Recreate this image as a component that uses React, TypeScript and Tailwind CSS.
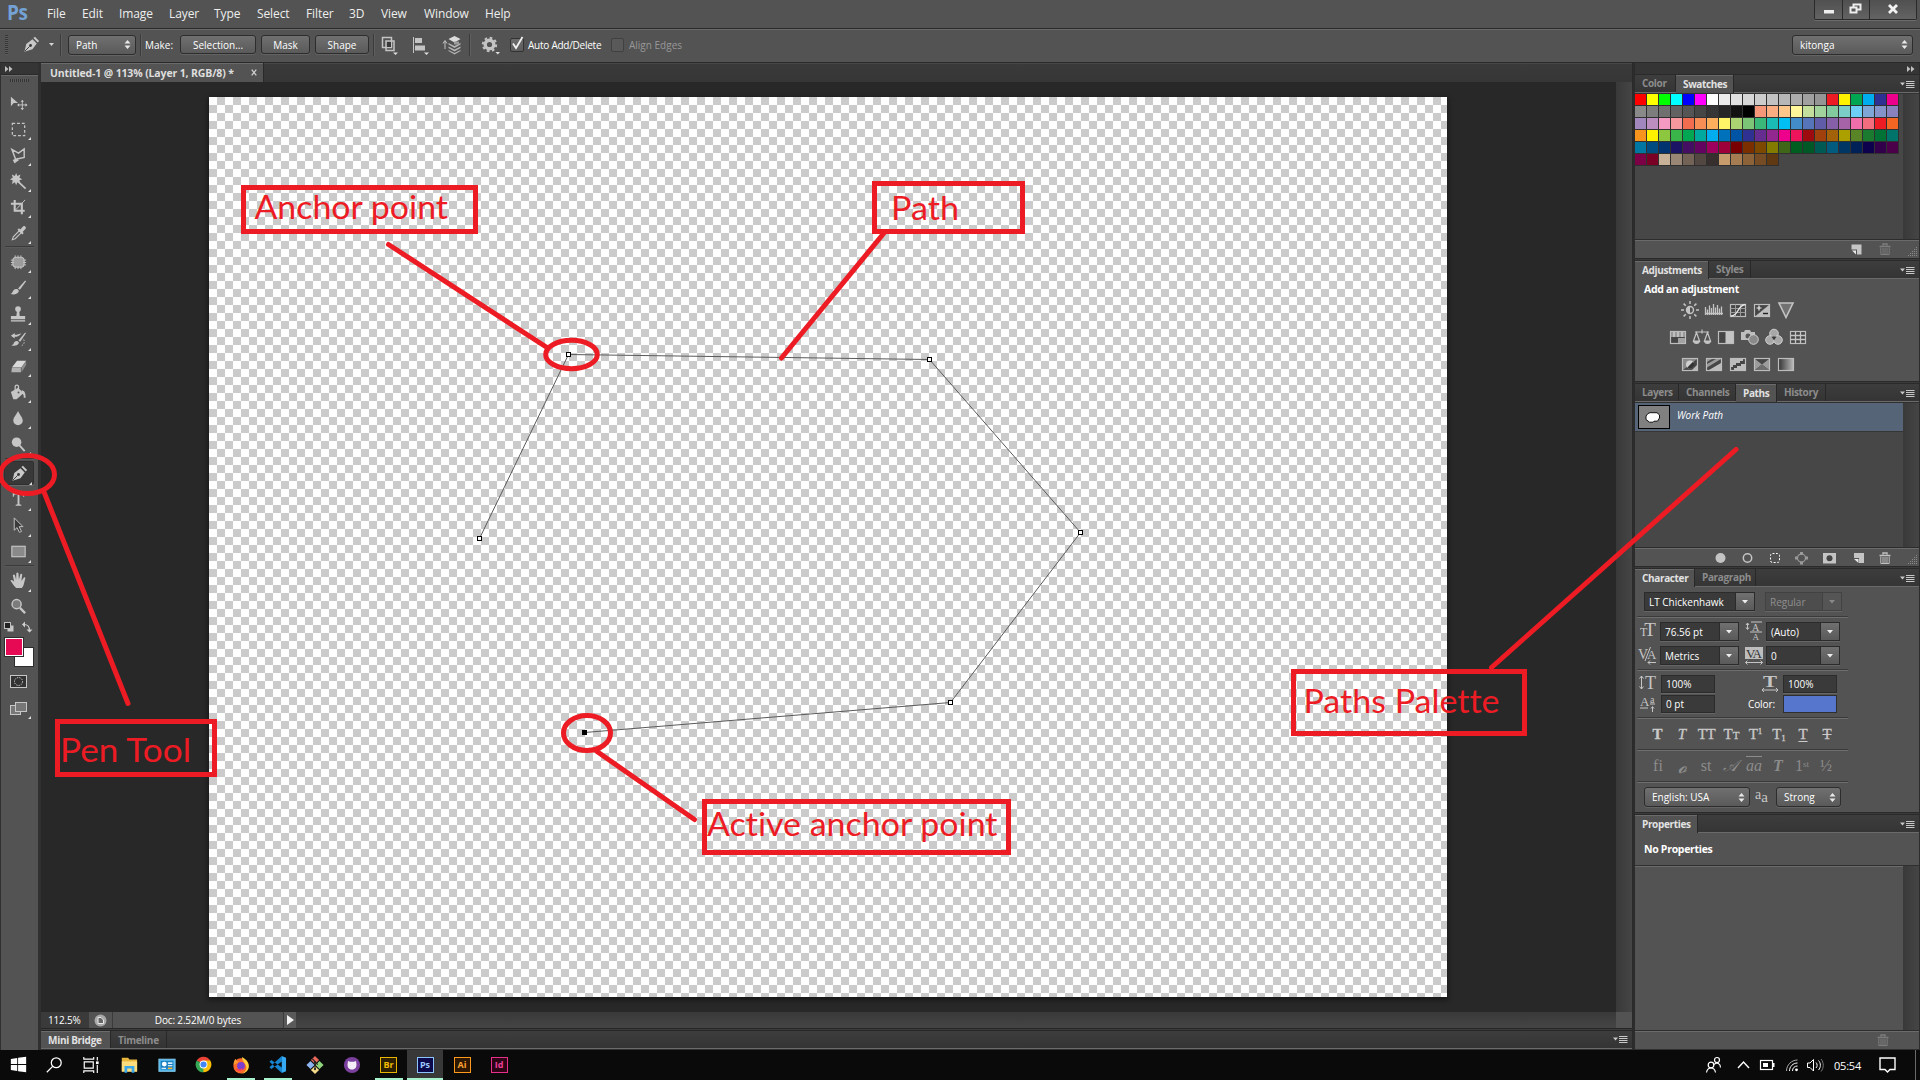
import React from "react";
import type { ReactNode } from "react";

const SWATCH_ROWS = [
  "ff0000 ffff00 00ff00 00ffff 0000ff ff00ff ffffff ebebeb e1e1e1 d7d7d7 cccccc c2c2c2 b7b7b7 acacac a0a0a0 959595 ed1c24 fff200 00a651 00aeef 2e3192 ec008c",
  "898989 7d7d7d 707070 626262 555555 464646 363636 262626 111111 000000 f7977a f9ad81 fdc68a fff79a c4df9b a2d39c 82ca9d 7bcdc8 6ecff6 7ea7d8 8493ca 8882be",
  "a187be bc8dbf f49ac2 f6989d f26c4f f68e55 fbaf5c fff467 acd372 7cc576 3bb878 1abbb4 00bff3 438cca 5574b9 605ca8 855fa8 a763a8 f06ea9 f26d7d ed1c24 f26522",
  "f7941d fff200 8dc73f 39b54a 00a651 00a99d 00aeef 0072bc 0054a6 2e3192 662d91 92278f ec008c ed145b 9e0b0f a0410d a36209 aba000 598527 1a7b30 007236 00746b",
  "0076a3 004b80 003471 1b1464 440e62 630460 9e005d 9e0039 790000 7b2e00 7d4900 827b00 406618 005e20 005826 005952 005b7f 003663 002157 0d004c 32004b 4b0049",
  "7b0046 7a0026 c7b299 998675 736357 534741 362f2d c69c6d a67c52 8c6239 754c24 603913",
].map((row) => row.split(" "));

function Ico({ children, size = 20, className = "" }: { children: ReactNode; size?: number; className?: string }) {
  return (
    <svg width={size} height={size} viewBox="0 0 20 20" className={"shrink-0 " + className} fill="none">
      {children}
    </svg>
  );
}

const G = "#c4c4c4";

/* ---------- Menu bar ---------- */

const MENUS: [string, string][] = [
  ["File", "w-[35px]"],
  ["Edit", "w-[37px]"],
  ["Image", "w-[50px]"],
  ["Layer", "w-[45px]"],
  ["Type", "w-[43px]"],
  ["Select", "w-[49px]"],
  ["Filter", "w-[43px]"],
  ["3D", "w-[32px]"],
  ["View", "w-[43px]"],
  ["Window", "w-[61px]"],
  ["Help", "w-[40px]"],
];

function MenuBar() {
  return (
    <div className="flex h-[28px] shrink-0 items-start bg-[#535353]">
      <div className="w-[47px] pl-[7px] text-[21px] font-bold leading-[24px] tracking-[-0.5px] text-[#74a2d6] font-['Open_Sans',sans-serif]">
        <span className="inline-block origin-left scale-x-90">Ps</span>
      </div>
      {MENUS.map(([m, w]) => (
        <div key={m} className={"pt-[5px] text-[12px] leading-[17px] tracking-[-0.1px] text-[#eeeeee] " + w}>
          {m}
        </div>
      ))}
      <div className="ml-auto mr-[3px] flex h-[20px] rounded-b-[2px] border border-t-0 border-[#2a2a2a] bg-gradient-to-b from-[#505050] to-[#636363] shadow-[0_1px_0_#6c6c6c]">
        <div className="w-[28px] border-r border-[#2a2a2a]">
          <Ico className="ml-[4px] mt-px">
            <rect x="5" y="9" width="10" height="3.500" fill="#eee" />
          </Ico>
        </div>
        <div className="w-[27px] border-r border-[#2a2a2a]">
          <Ico className="ml-[2px] -mt-px">
            <path d="M8.500 9V5.500h7v5H12M5.500 8.500h6v5h-6z" stroke="#eee" strokeWidth="2" />
          </Ico>
        </div>
        <div className="w-[46px]">
          <Ico className="ml-[13px] -mt-px">
            <path d="M6 6l8 8M14 6l-8 8" stroke="#f2f2f2" strokeWidth="2.800" />
          </Ico>
        </div>
      </div>
    </div>
  );
}

/* ---------- Options bar ---------- */

function Button({ children, className }: { children: ReactNode; className: string }) {
  return (
    <div
      className={
        "flex h-[19px] items-center justify-center rounded-[3px] border border-[#2d2d2d] bg-gradient-to-b from-[#707070] to-[#5a5a5a] text-[10px] leading-none text-white shadow-[0_1px_0_#636363] " +
        className
      }
    >
      {children}
    </div>
  );
}

function UpDown() {
  return (
    <svg width="7" height="9" viewBox="0 0 7 9" className="shrink-0">
      <path d="M3.500 0L6.500 3.600H.5zM3.500 9L6.500 5.400H.5z" fill="#e8e8e8" />
    </svg>
  );
}

function Select({ children, className }: { children: ReactNode; className: string }) {
  return (
    <div
      className={
        "flex h-[20px] items-center justify-between rounded-[3px] border border-[#2d2d2d] bg-gradient-to-b from-[#707070] to-[#5a5a5a] pr-[4px] pl-[7px] text-[10px] leading-none text-white shadow-[0_1px_0_#636363] " +
        className
      }
    >
      <span>{children}</span>
      <UpDown />
    </div>
  );
}

function Sep() {
  return <div className="h-[22px] w-px shrink-0 bg-[#3b3b3b] shadow-[1px_0_0_#5f5f5f]" />;
}

function CornerTri({ className = "" }: { className?: string }) {
  return (
    <svg width="5" height="4" viewBox="0 0 5 4" className={className}>
      <path d="M0 0h5L2.500 3z" fill="#d5d5d5" />
    </svg>
  );
}

function PenShape() {
  return (
    <g>
      <path d="M2.500 17.500L4.500 9.500 11 4.500 15.500 9 11 15z" fill="#c8c8c8" />
      <path d="M12 3.200L13.600 1.800 18 6.300 16.600 7.900z" fill="#c8c8c8" />
      <path d="M3 17l5-5" stroke="#3a3a3a" strokeWidth="1" />
      <circle cx="9" cy="11" r="1.500" fill="#3a3a3a" />
    </g>
  );
}

function OptionsBar() {
  return (
    <div className="flex h-[34px] shrink-0 items-center border-t border-[#2a2a2a] bg-[#535353] pb-[2px] shadow-[inset_0_1px_0_#6b6b6b]">
      <div className="ml-[5px] h-[20px] w-[3px] bg-[repeating-linear-gradient(to_bottom,#353535_0_1px,#5c5c5c_1px_2px)]" />
      <Ico className="ml-[14px]" size={19}>
        <PenShape />
      </Ico>
      <CornerTri className="ml-[8px]" />
      <div className="ml-[6px]" />
      <Sep />
      <Select className="ml-[7px] w-[68px]">Path</Select>
      <div className="ml-[4px]" />
      <Sep />
      <div className="ml-[4px] w-[35px] text-[10px] leading-none text-white">Make:</div>
      <Button className="w-[76px]">Selection...</Button>
      <Button className="ml-[5px] w-[49px]">Mask</Button>
      <Button className="ml-[5px] w-[54px]">Shape</Button>
      <div className="ml-[4px]" />
      <Sep />
      <div className="ml-[5px] flex w-[31px] items-end">
        <Ico>
          <path d="M3.500 2.500h9v10h-9z" stroke={G} strokeWidth="1.500" />
          <path d="M7 6h8v9.500H7z" stroke={G} strokeWidth="1.500" />
          <path d="M8 7h4v5H8z" fill="#3a3a3a" />
          <path d="M14 17.500h5l-2.500 2.500z" fill="#ddd" />
        </Ico>
      </div>
      <div className="w-[32px]">
        <Ico>
          <path d="M3.500 2v16" stroke={G} />
          <path d="M5 3h7v5H5zM5 10.500h10v5H5z" fill={G} />
          <path d="M14 17.500h5l-2.500 2.500z" fill="#ddd" />
        </Ico>
      </div>
      <div className="w-[27px]">
        <Ico>
          <path d="M3 14V6M1 8.500l2-3 2 3" stroke={G} />
          <path d="M12.500 1l6 3-6 3.500-6-3.500z" fill="#dcdcdc" />
          <path d="M6.500 8l6 3 6-3v1.500l-6 3.500-6-3.500zM6.500 11.500l6 3 6-3V13l-6 3.500L6.500 13zM6.500 15l6 3 6-3v1l-6 3.500-6-3.500z" fill="#b5b5b5" />
          <path d="M12 6.500h5v3h-5z" fill="#9c9c9c" />
        </Ico>
      </div>
      <Sep />
      <div className="ml-[10px] w-[30px]">
        <Ico>
          <circle cx="9.500" cy="9.500" r="4.300" stroke={G} strokeWidth="3.400" />
          <circle cx="9.500" cy="9.500" r="6.700" stroke={G} strokeWidth="2" strokeDasharray="2.630 2.630" />
          <path d="M15.500 17h4.500L17.750 19.500z" fill="#ddd" />
        </Ico>
      </div>
      <div className="relative h-[14px] w-[14px] rounded-[2px] border border-[#333] bg-gradient-to-b from-[#6c6c6c] to-[#5c5c5c]">
        <svg width="14" height="15" viewBox="0 0 14 15" className="absolute -top-[3px] -left-px">
          <path d="M3 7.500l3 4.500 6.500-11" fill="none" stroke="#f0f0f0" strokeWidth="1.800" />
        </svg>
      </div>
      <div className="ml-[4px] w-[83px] whitespace-nowrap text-[10px] leading-none tracking-[-0.25px] text-white">Auto Add/Delete</div>
      <div className="h-[14px] w-[13px] rounded-[2px] border border-[#404040] bg-[#595959]" />
      <div className="ml-[5px] text-[10px] leading-none tracking-[0px] text-[#989898]">Align Edges</div>
      <Select className="mr-[7px] ml-auto w-[121px]">kitonga</Select>
    </div>
  );
}

/* ---------- Tool column ---------- */

const shine = "#c6c6c6";

const TOOL_GROUPS: { icon: ReactNode; tri: boolean; active?: boolean }[][] = [
  [
    {
      tri: false,
      icon: (
        <g>
          <path d="M2 3l7.500 6.500H5L2 13z" fill={shine} />
          <path d="M14 7v9M9.500 11.500h9" stroke={shine} />
          <path d="M14 6l1.800 2.200h-3.600zM14 17l1.800-2.200h-3.600zM8.500 11.500l2.200-1.800v3.600zM19.500 11.500l-2.200-1.800v3.600z" fill={shine} />
        </g>
      ),
    },
    { tri: true, icon: <rect x="3.500" y="3.500" width="13" height="13" stroke={shine} strokeWidth="1.300" strokeDasharray="3 2" /> },
    {
      tri: true,
      icon: <path d="M3 3.500l7 4 6-4.500v9L7 14 3 3.500zM7 14l-2 1 1 2 3-2-2-1-1 4" stroke={shine} strokeWidth="1.500" />,
    },
    {
      tri: true,
      icon: (
        <g>
          <path d="M8 8.500l9.500 9" stroke={shine} strokeWidth="1.800" />
          <path d="M7.500 1l1.300 3.200L12 2.500 11 6l3 1.500-3 1.300 1 3.500-3.200-1.500L7.500 14l-1.300-3.200L3 12.500 4 9 1 7.500 4 6 3 2.500l3.200 1.700z" fill={shine} />
        </g>
      ),
    },
    {
      tri: true,
      icon: (
        <g>
          <path d="M2 6h11.500v11M6 2v11.500h10.500" stroke={shine} strokeWidth="2.200" />
          <path d="M7 12.500L17 2" stroke={shine} />
        </g>
      ),
    },
    {
      tri: true,
      icon: (
        <g>
          <path d="M3.500 16.500l1-3L11 7l2 2-6.500 6.500z" stroke={shine} strokeWidth="1.200" />
          <path d="M9 6l5 5 1.500-1.500-1.200-1.200L17.500 5c1-1.500-.8-3.700-2.700-2.500l-3 3.200L10.500 4.500z" fill={shine} />
        </g>
      ),
    },
  ],
  [
    {
      tri: true,
      icon: (
        <g>
          <rect x="4" y="4.500" width="12" height="10.500" rx="3" fill="#9c9c9c" stroke={shine} />
          <path d="M6.500 2.500v3M9.500 2.500v3M12.500 2.500v3M6.500 14v3M9.500 14v3M12.500 14v3M2 7.500h3M2 10h3M2 12.500h3M15 7.500h3M15 10h3M15 12.500h3" stroke={shine} />
        </g>
      ),
    },
    {
      tri: true,
      icon: (
        <g>
          <path d="M9.500 10L17 1.500l1 .8-6.500 9z" fill={shine} />
          <path d="M1.500 15.500c3-.2 2-5 6-5 2 0 3.500 1.500 2.500 3.300-1.500 2.700-6 3-8.500 1.700z" fill={shine} />
        </g>
      ),
    },
    {
      tri: true,
      icon: (
        <g>
          <circle cx="9.500" cy="4.300" r="3" fill={shine} />
          <path d="M8.500 6h2.200l.6 5.500H17V15H2v-3.500h5.700z" fill={shine} />
          <path d="M2 16.700h15" stroke={shine} strokeWidth="1.400" />
        </g>
      ),
    },
    {
      tri: true,
      icon: (
        <g>
          <path d="M10 10L17 1.500l.8.800-6 9z" fill={shine} />
          <path d="M2.500 15c3 0 2-4.500 5.500-4.500 2 0 3 1.500 2 3-1.200 2.200-5.500 2.500-7.500 1.500z" fill={shine} />
          <path d="M2 5l4-3v2c3 0 5-1.500 7-1.500C11 5 9 6 6 6v2z" fill={shine} />
          <path d="M15.500 9c1.500 3 0 6-3.500 7" stroke={shine} strokeDasharray="1.500 1.500" />
        </g>
      ),
    },
    {
      tri: true,
      icon: (
        <g>
          <path d="M8.500 4h9.500l-5 7H3z" fill="#dadada" />
          <path d="M3 11.500h9.500V16H2.500z" fill="#b2b2b2" />
          <path d="M13.200 11L18 4.500v4L13.200 16z" fill="#8d8d8d" />
        </g>
      ),
    },
    {
      tri: true,
      icon: (
        <g>
          <path d="M2 9.500L9.500 5l6 5.500L8 17H4.500z" fill={shine} />
          <path d="M6.500 9V4c0-2.500 3.500-2.500 3.500 0v6" stroke={shine} strokeWidth="1.300" />
          <path d="M13.500 7.500c3 .5 4 3 4 8h-2c.2-3-.5-4-2-4.500z" fill={shine} />
          <circle cx="10" cy="10" r="1" fill="#555" />
        </g>
      ),
    },
    { tri: true, icon: <path d="M9.500 2C11 6 14.500 8.500 14.500 12.200c0 3-2.200 4.800-5 4.800s-5-1.800-5-4.800C4.500 8.500 8 6 9.500 2z" fill={shine} /> },
    {
      tri: true,
      icon: (
        <g>
          <circle cx="8" cy="7.500" r="5" fill={shine} />
          <path d="M11 11l5.500 6" stroke={shine} strokeWidth="2" />
        </g>
      ),
    },
  ],
  [
    { tri: true, active: true, icon: <PenShape /> },
    {
      tri: true,
      icon: <path d="M4 3h12v4h-1l-.8-2.200H11V15l2 .6v1H7v-1l2-.6V4.800H5.800L5 7H4z" fill={shine} />,
    },
    { tri: true, icon: <path d="M5.500 2v13l3-2.800 2.500 5 2.200-1-2.500-5h4z" fill="#3a3a3a" stroke={shine} /> },
    { tri: true, icon: <rect x="3" y="4.500" width="14" height="11" fill="#8a8a8a" stroke={shine} strokeWidth="1.200" /> },
  ],
  [
    {
      tri: true,
      icon: (
        <path
          d="M7.500 18C5 15.500 3.500 12.500 1.500 10.200c.8-1.300 2.500-.6 4 1.300L4 4.500c.8-1.300 2-.8 2.400.5l1.100 4.200.2-6.700c.6-1.300 2-1.200 2.300 0l.4 6.600 1.500-5.700c.7-1 2-.6 2 .6l-.9 6.500L15.500 7c1-.8 2-.1 1.600 1.200-1.300 4-1.300 7.300-3.600 9.800z"
          fill={shine}
        />
      ),
    },
    {
      tri: false,
      icon: (
        <g>
          <circle cx="8" cy="7.500" r="4.800" fill="#7c7c7c" stroke={shine} strokeWidth="1.500" />
          <path d="M11.500 11.500l5.500 5.500" stroke={shine} strokeWidth="2.400" />
        </g>
      ),
    },
  ],
];

function ToolCell({ icon, tri, active, lower }: { icon: ReactNode; tri: boolean; active?: boolean; lower: boolean }) {
  return (
    <div className="flex h-[26px] w-full items-center">
      <div
        className={
          "ml-[3px] flex h-[24px] w-[30px] items-center pl-[5px] " +
          (active ? "rounded-[2px] border border-[#2f2f2f] bg-[#383838] pl-[4px] shadow-[0_1px_0_#6a6a6a]" : "")
        }
      >
        <Ico size={19} className={lower ? "mt-[2px]" : ""}>
          {icon}
        </Ico>
        {tri && (
          <svg width="3" height="3" viewBox="0 0 3 3" className="mt-[20px]">
            <path d="M3 0v3H0z" fill="#e0e0e0" />
          </svg>
        )}
      </div>
    </div>
  );
}

function Divider() {
  return <div className="ml-[4px] h-px w-[29px] bg-[#3a3a3a] shadow-[0_1px_0_#5a5a5a]" />;
}

function ToolColumn() {
  return (
    <div className="flex w-[41px] shrink-0 flex-col border-r-[3px] border-l border-[#303030]">
      <div className="flex h-[12px] shrink-0 items-center border-b border-[#2a2a2a] bg-[#353535] pl-[4px]">
        <svg width="8" height="6" viewBox="0 0 8 6">
          <path d="M0 0l3.500 3L0 6zM4 0l3.500 3L4 6z" fill="#c0c0c0" />
        </svg>
      </div>
      <div className="flex flex-1 flex-col bg-[#535353] shadow-[inset_0_1px_0_#696969]">
        <div className="mt-[4px] ml-[9px] h-[3px] w-[19px] bg-[repeating-linear-gradient(to_right,#333_0_1px,#5c5c5c_1px_2px)]" />
        <div className="mt-[7px] flex flex-col">
          {TOOL_GROUPS.map((g, i) => (
            <div key={i} className="flex flex-col">
              {i > 0 && (
                <div className={"flex items-center " + (i === 2 ? "h-[4px]" : "h-[3px]")}>
                  <Divider />
                </div>
              )}
              {g.map((t, j) => (
                <ToolCell key={j} {...t} lower={i < 2} />
              ))}
            </div>
          ))}
        </div>
        <svg width="37" height="102" viewBox="0 0 37 102" fill="none">
          <rect x="6.500" y="6.500" width="6" height="6" fill="#c8c8c8" />
          <rect x="3.500" y="3.500" width="6" height="6" fill="#222" stroke="#c0c0c0" />
          <path d="M23 5.500c4 0 5.500 2 5.500 6" stroke="#cfcfcf" strokeWidth="1.200" />
          <path d="M21 5.500l3-3v6zM28.500 13.500l-3-3h6z" fill="#cfcfcf" />
          <rect x="13.500" y="28.500" width="19" height="19" fill="#fff" stroke="#2d2d2d" />
          <rect x="3.500" y="18.500" width="19" height="19" fill="#fff" stroke="#2d2d2d" />
          <rect x="5" y="20" width="16" height="16" fill="#e60a55" />
          <rect x="9.500" y="56.500" width="16" height="12" fill="#333" stroke="#c6c6c6" />
          <circle cx="17.500" cy="62.500" r="4" stroke="#e0e0e0" strokeDasharray="1.200 1.200" />
          <rect x="9.500" y="86.500" width="10" height="9" fill="#777" stroke="#c6c6c6" />
          <rect x="14.500" y="83.500" width="11" height="9" fill="#777" stroke="#c6c6c6" />
          <path d="M30 97v3h-3z" fill="#e0e0e0" />
        </svg>
      </div>
    </div>
  );
}

/* ---------- Document window ---------- */

function DocumentArea() {
  return (
    <div className="flex w-[1592px] shrink-0 flex-col border-r border-[#2a2a2a]">
      <div className="flex h-[19px] shrink-0 bg-gradient-to-b from-[#3a3a3a] to-[#363636] shadow-[inset_0_1px_0_#474747]">
        <div className="flex w-[223px] items-center border-r border-[#2a2a2a] bg-[#535353] pl-[9px] shadow-[inset_0_1px_0_#6b6b6b]">
          <span className="whitespace-nowrap pt-px text-[10.500px] font-bold leading-none tracking-[-0.14px] text-[#dedede]">
            Untitled-1 @ 113% (Layer 1, RGB/8) *
          </span>
          <svg width="6" height="7" viewBox="0 0 6 7" className="ml-auto mr-[6px]">
            <path d="M.7.700l4.600 5.600M5.300.700L.7 6.300" stroke="#cfcfcf" strokeWidth="1.300" />
          </svg>
        </div>
      </div>
      <div className="flex min-h-0 flex-1">
        <div className="flex-1 bg-[#282828] pt-[15px] pl-[168px]">
          <div className="h-[900px] w-[1238px] bg-[conic-gradient(#cbcbcb_25%,#ffffff_0_50%,#cbcbcb_0_75%,#ffffff_0)] bg-[length:16px_16px] shadow-[0_2px_5px_1px_rgba(0,0,0,0.45)]" />
        </div>
        <div className="w-[16px] bg-gradient-to-r from-[#393939] to-[#454545]" />
      </div>
      <div className="flex h-[16px] shrink-0 text-[10px] leading-none">
        <div className="flex w-[47px] items-center bg-[#3a3a3a] pl-[7px] tracking-[-0.2px] text-white">112.5%</div>
        <div className="ml-px flex w-[23px] items-center justify-center bg-[#535353]">
          <svg width="13" height="13" viewBox="0 0 13 13">
            <circle cx="6.500" cy="6.500" r="6" fill="#a8a8a8" />
            <path d="M4 3.500h3L9.500 6v3.500H4z" fill="#666" stroke="#e8e8e8" />
          </svg>
        </div>
        <div className="ml-px flex w-[170px] items-center justify-center bg-[#535353] tracking-[-0.15px] text-white">
          Doc: 2.52M/0 bytes
        </div>
        <div className="ml-px flex w-[12px] items-center justify-center bg-[#5a5a5a]">
          <svg width="7" height="10" viewBox="0 0 7 10">
            <path d="M0 0l7 5-7 5z" fill="#f4f4f4" />
          </svg>
        </div>
        <div className="flex-1 bg-gradient-to-b from-[#393939] to-[#454545]" />
        <div className="w-[16px] bg-[#535353]" />
      </div>
      <div className="h-[3px] shrink-0 border-y border-[#262626] bg-[#3c3c3c]" />
      <div className="flex h-[18px] shrink-0 border-b border-[#6a6a6a] bg-gradient-to-b from-[#3d3d3d] to-[#343434] text-[10px] font-bold leading-none tracking-[-0.3px]">
        <div className="flex w-[70px] items-center border-r border-[#282828] bg-[#535353] pl-[7px] text-[#e2e2e2] shadow-[inset_0_1px_0_#6b6b6b]">
          <span className="whitespace-nowrap">Mini Bridge</span>
        </div>
        <div className="flex w-[56px] items-center border-r border-[#282828] pl-[7px] text-[#8c8c8c]">Timeline</div>
        <div className="mr-[4px] ml-auto flex items-center">
          <PanelMenu />
        </div>
      </div>
      <div className="h-px shrink-0 bg-[#303030]" />
    </div>
  );
}

/* ---------- Right dock ---------- */

function PanelMenu() {
  return (
    <svg width="15" height="9" viewBox="0 0 15 9">
      <path d="M0 2.500h5L2.500 5.500z" fill="#c8c8c8" />
      <path d="M6 1.500h8.500M6 3.500h8.500M6 5.500h8.500M6 7.500h8.500" stroke="#c8c8c8" />
    </svg>
  );
}

type Tab = { label: string; w: string; active?: boolean };

function Tabs({ tabs }: { tabs: Tab[] }) {
  return (
    <div className="flex h-[18px] shrink-0 bg-gradient-to-b from-[#3d3d3d] to-[#343434] shadow-[inset_0_-1px_0_#6a6a6a]">
      {tabs.map((t) => (
        <div
          key={t.label}
          className={
            "flex items-center border-r border-[#282828] pb-px pl-[7px] text-[10px] font-bold leading-none tracking-[-0.35px] " +
            (t.active ? "bg-[#535353] text-[#e2e2e2] shadow-[inset_0_1px_0_#6b6b6b] " : "mb-px text-[#8c8c8c] ") +
            t.w
          }
        >
          {t.label}
        </div>
      ))}
      <div className="mr-[4px] ml-auto flex items-center">
        <PanelMenu />
      </div>
    </div>
  );
}

function Trash({ dim = false }: { dim?: boolean }) {
  const c = dim ? "#7d7d7d" : "#c0c0c0";
  return (
    <svg width="12" height="12" viewBox="0 0 12 12" fill="none" stroke={c}>
      <path d="M.5 3.500h11M4 2.500V1h4v1.500" strokeWidth="1.400" />
      <path d="M1.800 4.500v7h8.400v-7M4 5v6M6 5v6M8 5v6" />
    </svg>
  );
}

function NewPage() {
  return (
    <svg width="11" height="11" viewBox="0 0 11 11">
      <path d="M.5.500H10.500v10H6V5.500H.5z" fill="#c6c6c6" />
      <path d="M1 6.500h4v4z" fill="#e8e8e8" />
    </svg>
  );
}

function Grip() {
  return (
    <svg width="10" height="10" viewBox="0 0 10 10" fill="#8a8a8a">
      <path d="M8 0h1v1H8zM6 2h1v1H6zM8 2h1v1H8zM4 4h1v1H4zM6 4h1v1H6zM8 4h1v1H8zM2 6h1v1H2zM4 6h1v1H4zM6 6h1v1H6zM8 6h1v1H8zM0 8h1v1H0zM2 8h1v1H2zM4 8h1v1H4zM6 8h1v1H6zM8 8h1v1H8z" />
    </svg>
  );
}

function Gap() {
  return <div className="h-[3px] shrink-0 border-y border-[#2a2a2a] bg-[#3a3a3a]" />;
}

function ScrollTrack() {
  return <div className="w-[16px] shrink-0 bg-gradient-to-r from-[#393939] to-[#454545]" />;
}

function SwatchesPanel() {
  return (
    <>
      <Tabs
        tabs={[
          { label: "Color", w: "w-[41px]" },
          { label: "Swatches", w: "w-[58px]", active: true },
        ]}
      />
      <div className="flex h-[146px] shrink-0 border-t border-[#333] bg-[#474747]">
        <div className="flex-1">
          {SWATCH_ROWS.map((row, i) => (
            <div key={i} className="flex">
              {row.map((c, j) => (
                <div key={j} className="h-[12px] w-[12px] border-r border-b border-[#303030]" style={{ backgroundColor: "#" + c }} />
              ))}
            </div>
          ))}
        </div>
        <ScrollTrack />
      </div>
      <div className="flex h-[19px] shrink-0 items-center border-t border-[#2d2d2d] bg-[#535353] pl-[216px] shadow-[inset_0_1px_0_#6b6b6b]">
        <NewPage />
        <div className="w-[17px]" />
        <Trash dim />
        <div className="mt-[5px] ml-auto mr-px">
          <Grip />
        </div>
      </div>
    </>
  );
}

const frame = <rect x="2.500" y="4.500" width="15" height="12" fill="#464646" stroke="#bdbdbd" strokeWidth="1.200" />;

const ADJ: ReactNode[][] = [
  [
    <g key="a">
      <circle cx="10" cy="10" r="3.500" stroke={G} strokeWidth="1.400" />
      <path d="M10 6.500a3.500 3.500 0 000 7z" fill={G} />
      <path d="M10 1v3M10 16v3M1 10h3M16 10h3M3.600 3.600l2.200 2.200M14.200 14.200l2.200 2.200M3.600 16.400l2.200-2.200M14.200 5.800l2.200-2.200" stroke={G} strokeWidth="1.500" />
    </g>,
    <path
      key="b"
      d="M1.500 7v8M3.500 9.500v5.500M5.500 5.500v9.500M7.500 8v7M9.500 4v11M11.500 7.500v7.500M13.500 5v10M15.500 8.500v6.500M17.500 6.500v8.500M1 13.500h18"
      stroke={G}
      strokeWidth="1.300"
    />,
    <g key="c">
      {frame}
      <path d="M7.500 4.500v12M12.500 4.500v12M2.500 8.500h15M2.500 12.500h15" stroke="#9a9a9a" />
      <path d="M3 16c8 0 6-11 14.500-11.500" stroke="#e6e6e6" strokeWidth="1.400" />
    </g>,
    <g key="d">
      {frame}
      <path d="M17 5v11H3.500z" fill="#bdbdbd" />
      <path d="M4.500 8h5M7 5.500v5" stroke="#eee" strokeWidth="1.200" />
      <path d="M11 13.500h5" stroke="#222" strokeWidth="1.400" />
    </g>,
    <path key="e" d="M3 3h14l-7 14.500z" fill="#727272" stroke={G} strokeWidth="1.600" />,
  ],
  [
    <g key="a">
      {frame}
      <path d="M3 5h14v5H3z" fill="#999" />
      <path d="M6 5v5M10 5v5M14 5v5" stroke="#ccc" strokeWidth="1.500" />
      <path d="M10 11h7v5h-7z" fill="#a2a2a2" />
    </g>,
    <g key="b" stroke={G} strokeWidth="1.200">
      <path d="M3 5h14M10 2.500v4M4.500 5.500L1.500 14h6zM15.500 5.500L12.500 14h6z" />
      <path d="M1.500 14.500c1 2.500 5 2.500 6 0zM12.500 14.500c1 2.500 5 2.500 6 0z" fill={G} />
    </g>,
    <g key="c">
      {frame}
      <path d="M9.500 5H17v11H9.500z" fill="#c4c4c4" />
    </g>,
    <g key="d">
      <path d="M1 5h3l1-2h5l1 2h4v8H1z" fill="#bdbdbd" />
      <circle cx="8" cy="9" r="2.500" fill="#555" />
      <circle cx="13.500" cy="12.500" r="4.800" fill="#8a8a8a" stroke="#d0d0d0" />
    </g>,
    <g key="e" fill="#a8a8a8" stroke="#d0d0d0">
      <circle cx="10" cy="6.500" r="4.300" />
      <circle cx="6" cy="13" r="4.300" />
      <circle cx="14" cy="13" r="4.300" />
      <path d="M7.500 9.500h5L10 13.500z" fill="#3a3a3a" stroke="none" />
    </g>,
    <g key="f">
      {frame}
      <path d="M7.500 4.500v12M12.500 4.500v12M2.500 8.500h15M2.500 12.500h15" stroke="#c4c4c4" strokeWidth="1.300" />
    </g>,
  ],
  [
    <g key="a">
      {frame}
      <path d="M3 16V5h14z" fill="#8b8b8b" />
      <circle cx="10" cy="10.500" r="4" fill="#d0d0d0" />
      <path d="M13 7.700a4 4 0 01-5.700 5.700z" fill="#333" />
      <path d="M12 16h5v-5z" fill="#b8b8b8" />
    </g>,
    <g key="b">
      {frame}
      <path d="M3 5h5L3 8zM3 10l9-5h5L3 13.500z" fill="#9b9b9b" />
      <path d="M5 16l12-7v7z" fill="#bdbdbd" />
    </g>,
    <g key="c">
      {frame}
      <path d="M3 5h12v2h-3v2H8v2H5v2H3z" fill="#bdbdbd" />
      <path d="M6 16v-2h3v-2h4v-2h4v6z" fill="#bdbdbd" />
    </g>,
    <g key="d">
      {frame}
      <path d="M3 5l7 5.500L3 16zM17 5l-7 5.500 7 5.500z" fill="#9c9c9c" />
      <path d="M3 16l7-5.500L17 16z" fill="#6d6d6d" />
    </g>,
    <g key="e">
      <defs>
        <linearGradient id="gmap">
          <stop offset="0" stopColor="#333" />
          <stop offset="1" stopColor="#bbb" />
        </linearGradient>
      </defs>
      <rect x="2.500" y="4.500" width="15" height="12" fill="url(#gmap)" stroke="#bdbdbd" strokeWidth="1.200" />
    </g>,
  ],
];

function AdjustmentsPanel() {
  return (
    <>
      <Tabs
        tabs={[
          { label: "Adjustments", w: "w-[74px]", active: true },
          { label: "Styles", w: "w-[42px]" },
        ]}
      />
      <div className="h-[102px] shrink-0 bg-[#535353]">
        <div className="h-[17px] whitespace-nowrap pt-[5px] pl-[9px] text-[10.500px] font-bold leading-none tracking-[-0.3px] text-white">Add an adjustment</div>
        {ADJ.map((row, i) => (
          <div key={i} className={"flex h-[27px] items-center " + (i === 1 ? "pl-[31px]" : "pl-[43px]")}>
            {row.map((ic, j) => (
              <div key={j} className="flex w-[24px] justify-center">
                <Ico>{ic}</Ico>
              </div>
            ))}
          </div>
        ))}
      </div>
    </>
  );
}

function PathsPanel() {
  return (
    <>
      <Tabs
        tabs={[
          { label: "Layers", w: "w-[44px]" },
          { label: "Channels", w: "w-[57px]" },
          { label: "Paths", w: "w-[41px]", active: true },
          { label: "History", w: "w-[49px]" },
        ]}
      />
      <div className="flex h-[145px] shrink-0 border-t border-[#303030] bg-[#474747]">
        <div className="flex-1">
          <div className="flex h-[29px] border-b border-[#363636] bg-[#566478] pt-[2px] pl-[3px]">
            <div className="flex h-[24px] w-[32px] items-center justify-center border border-black bg-[#808080]">
              <svg width="16" height="11" viewBox="0 0 16 11" className="mr-[3px]">
                <path d="M3 1.500L5 .700h7L14.500 3v3L12.500 9.200H9L8 10.200H4.500L1 7.500V4z" fill="#fff" stroke="#111" />
              </svg>
            </div>
            <div className="ml-[7px] pt-[4px] text-[10px] italic leading-[13px] text-white">Work Path</div>
          </div>
        </div>
        <ScrollTrack />
      </div>
      <div className="flex h-[19px] shrink-0 items-center border-t border-[#2d2d2d] bg-[#535353] shadow-[inset_0_1px_0_#6b6b6b]">
        <svg width="170" height="14" viewBox="0 0 170 14" fill="none" className="mt-[2px] ml-[76px]">
          <circle cx="9.500" cy="7" r="5" fill="#c4c4c4" />
          <circle cx="36.500" cy="7" r="4.200" stroke="#c4c4c4" strokeWidth="1.500" />
          <rect x="59.500" y="2.500" width="9" height="9" rx="2" stroke="#fff" strokeDasharray="2 1.500" />
          <circle cx="90.500" cy="7" r="4" stroke="#9a9a9a" strokeWidth="1.200" />
          <path d="M89 1h3v3h-3zM89 10.500h3v3h-3zM84 5.500h3v3h-3zM94 5.500h3v3h-3z" fill="#9a9a9a" />
          <rect x="112" y="2" width="13" height="10.500" fill="#c4c4c4" />
          <circle cx="118.500" cy="7.200" r="3" fill="#444" />
          <path d="M143 2h10v10h-5V7h-5z" fill="#c4c4c4" />
          <path d="M143 8h4.500v4z" fill="#e8e8e8" />
        </svg>
        <div className="mt-px -ml-[2px]">
          <Trash />
        </div>
        <div className="mt-[5px] ml-auto mr-px">
          <Grip />
        </div>
      </div>
    </>
  );
}

function Combo({ children, w, dim = false }: { children: ReactNode; w: string; dim?: boolean }) {
  return (
    <div
      className={
        "flex h-[19px] items-center border text-[10px] leading-none shadow-[0_1px_0_#666] " +
        (dim ? "border-[#424242] bg-[#4d4d4d] text-[#8e8e8e] " : "border-[#2b2b2b] bg-[#3a3a3a] text-white ") +
        w
      }
    >
      <span className="flex-1 whitespace-nowrap pl-[4px]">{children}</span>
      <div
        className={
          "flex h-full w-[19px] items-center justify-center border-l " +
          (dim ? "border-[#424242] bg-[#555]" : "border-[#2b2b2b] bg-gradient-to-b from-[#707070] to-[#5a5a5a]")
        }
      >
        <svg width="6" height="4" viewBox="0 0 6 4">
          <path d="M0 0h6L3 3.500z" fill={dim ? "#888" : "#eee"} />
        </svg>
      </div>
    </div>
  );
}

function Field({ children }: { children: ReactNode }) {
  return (
    <div className="flex h-[18px] w-[54px] items-center border border-[#2b2b2b] bg-[#3a3a3a] pl-[4px] text-[10px] leading-none text-white shadow-[0_1px_0_#666]">
      {children}
    </div>
  );
}

function Rule() {
  return <div className="ml-[2px] h-[2px] w-[211px] shrink-0 border-t border-[#3a3a3a] bg-[#6e6e6e]" />;
}

const serif = "font-['Liberation_Serif',serif]";

function CharacterPanel() {
  return (
    <>
      <Tabs
        tabs={[
          { label: "Character", w: "w-[60px]", active: true },
          { label: "Paragraph", w: "w-[61px]" },
        ]}
      />
      <div className="flex h-[225px] shrink-0 flex-col bg-[#535353]">
        <div className="flex h-[29px] pt-[5px] pl-[9px]">
          <Combo w="w-[111px]">LT Chickenhawk</Combo>
          <div className="w-[10px]" />
          <Combo w="w-[77px]" dim>
            Regular
          </Combo>
        </div>
        <Rule />
        <div className="flex h-[23px] items-end">
          <div className={"w-[25px] pl-[5px] leading-[18px] text-[#c8c8c8] " + serif}>
            <span className="text-[12px]">T</span>
            <span className="-ml-[3px] text-[19px]">T</span>
          </div>
          <Combo w="w-[79px]">76.56 pt</Combo>
          <svg width="27" height="21" viewBox="0 -1 27 21" fill="none" className={serif}>
            <path d="M8.500 2v6M7 4l1.500-2L10 4M7 6.500l1.500 2 1.500-2M12 1h11M11 11h12" stroke={G} />
            <text x="13" y="10" fontSize="10" fill={G}>A</text>
            <text x="13.500" y="18.500" fontSize="9" fill={G}>A</text>
          </svg>
          <Combo w="w-[74px]">(Auto)</Combo>
        </div>
        <div className="flex h-[24px] items-end">
          <svg width="25" height="20" viewBox="0 0 25 20" fill="none" className={serif}>
            <text x="3" y="14" fontSize="14" fill={G}>V</text>
            <text x="12" y="14" fontSize="13" fill={G}>A</text>
            <path d="M10 16L15.500 2M13 17.500h8M15 15.500l-2 2 2 2" stroke={G} />
          </svg>
          <Combo w="w-[79px]">Metrics</Combo>
          <svg width="27" height="20" viewBox="0 0 27 20" fill="none" className={serif}>
            <rect x="6" y="2" width="18" height="12" fill="#bdbdbd" />
            <text x="7" y="13" fontSize="13" fill="#333" textLength="16">VA</text>
            <path d="M6.500 17.500h17M8.500 15.500l-2 2 2 2M21.500 15.500l2 2-2 2" stroke={G} />
          </svg>
          <Combo w="w-[74px]">0</Combo>
        </div>
        <div className="h-[4px]" />
        <Rule />
        <div className="flex h-[22px] items-end">
          <svg width="26" height="19" viewBox="0 0 26 19" fill="none" className={serif}>
            <path d="M6.500 2v13M4.500 4.500l2-2.500 2 2.500M4.500 12.500l2 2.500 2-2.500" stroke={G} />
            <text x="10" y="15" fontSize="18" fill={G}>T</text>
          </svg>
          <Field>100%</Field>
          <svg width="68" height="19" viewBox="0 0 68 19" fill="none" className={serif}>
            <text x="48" y="13" fontSize="16" fontWeight="bold" fill={G} textLength="14" lengthAdjust="spacingAndGlyphs">T</text>
            <path d="M47 16h16M49 14l-2 2 2 2M61 14l2 2-2 2" stroke={G} />
          </svg>
          <Field>100%</Field>
        </div>
        <div className="flex h-[20px] items-end">
          <svg width="26" height="20" viewBox="0 -1 26 20" fill="none" className={serif}>
            <text x="5" y="12" fontSize="13" fill={G}>A</text>
            <text x="15" y="8.500" fontSize="10" fill={G}>a</text>
            <path d="M5 14h8M15 10h5M17.500 18v-5M16 14.500l1.500-2 1.500 2" stroke={G} />
          </svg>
          <Field>0 pt</Field>
          <div className="flex h-[18px] w-[68px] items-center pb-px pl-[33px] text-[10px] leading-none tracking-[-0.1px] text-white">Color:</div>
          <div className="h-[18px] w-[54px] border border-[#2f2f2f] bg-[#5576cc]" />
        </div>
        <div className="h-[4px]" />
        <Rule />
        <div className={"flex h-[30px] items-center pl-[10px] text-[15px] leading-none text-[#cacaca] [-webkit-text-stroke:0.3px_#cacaca] " + serif}>
          <span className="w-[25px] text-center font-bold">T</span>
          <span className="w-[24px] text-center italic">T</span>
          <span className="w-[25px] text-center text-[15px] tracking-[-0.5px]">TT</span>
          <span className="w-[25px] text-center">
            T<span className="text-[11px]">T</span>
          </span>
          <span className="w-[23px] text-center">
            T<sup className="text-[9px]">1</sup>
          </span>
          <span className="w-[24px] text-center">
            T<sub className="text-[9px]">1</sub>
          </span>
          <span className="w-[24px] text-center underline underline-offset-2">T</span>
          <span className="w-[24px] text-center line-through">T</span>
        </div>
        <Rule />
        <div className={"flex h-[30px] items-center pl-[11px] text-[16px] leading-none text-[#8c8c8c] " + serif}>
          <span className="w-[24px] text-center">fi</span>
          <span className="w-[24px] text-center text-[19px] italic">&#x1D4F8;</span>
          <span className="w-[24px] text-center">st</span>
          <span className="w-[24px] text-center italic">&#x1D49C;</span>
          <span className="w-[24px] text-center italic overline">aa</span>
          <span className="w-[24px] text-center font-bold italic">T</span>
          <span className="w-[24px] text-center">
            1<sup className="text-[9px]">st</sup>
          </span>
          <span className="w-[24px] text-center">½</span>
        </div>
        <Rule />
        <div className="flex h-[24px] items-start pt-[4px] pl-[9px]">
          <Select className="w-[106px]">English: USA</Select>
          <div className={"w-[26px] pl-[5px] pt-px text-[14px] leading-[18px] text-[#c8c8c8] " + serif}>
            <span className="relative -top-[3px]">a</span>
            <span className="text-[15px]">a</span>
          </div>
          <Select className="w-[65px]">Strong</Select>
        </div>
      </div>
    </>
  );
}

function PropertiesPanel() {
  return (
    <>
      <Tabs tabs={[{ label: "Properties", w: "w-[63px]", active: true }]} />
      <div className="h-[32px] shrink-0 bg-[#535353] pt-[11px] pl-[9px] text-[10.500px] font-bold leading-none tracking-[-0.3px] text-white">
        No Properties
      </div>
      <div className="flex min-h-0 flex-1 border-t border-[#303030] bg-[#535353]">
        <div className="flex-1 shadow-[inset_0_1px_0_#6b6b6b]" />
        <ScrollTrack />
      </div>
      <div className="flex h-[19px] shrink-0 items-center border-t border-[#2d2d2d] bg-[#535353] pl-[242px] shadow-[inset_0_1px_0_#6b6b6b]">
        <Trash dim />
      </div>
    </>
  );
}

function Dock() {
  return (
    <div className="flex min-w-0 flex-1 flex-col border-r border-l-2 border-[#2c2c2c]">
      <div className="flex h-[11px] shrink-0 items-center justify-end bg-[#353535] pr-[4px]">
        <svg width="8" height="6" viewBox="0 0 8 6">
          <path d="M0 0l3.500 3L0 6zM4 0l3.500 3L4 6z" fill="#c0c0c0" />
        </svg>
      </div>
      <div className="h-px shrink-0 bg-[#2a2a2a]" />
      <SwatchesPanel />
      <Gap />
      <AdjustmentsPanel />
      <Gap />
      <PathsPanel />
      <Gap />
      <CharacterPanel />
      <Gap />
      <PropertiesPanel />
      <div className="h-px shrink-0 bg-[#303030]" />
    </div>
  );
}

/* ---------- Annotations drawn over the window ---------- */

function Marks() {
  const red = "#ed1c24";
  return (
    <svg width="1920" height="1080" viewBox="0 0 1920 1080" fill="none" className="pointer-events-none absolute inset-0">
      <path
        d="M479.500 538.500L568.500 354.500 929.500 359.500 1080.500 532.500 950.500 702.500 584.500 732.500"
        stroke="#5a5a5a"
        strokeWidth="1"
      />
      <g fill="#fff" stroke="#000" strokeWidth="1">
        <rect x="477.500" y="536.500" width="4" height="4" />
        <rect x="566.500" y="352.500" width="4" height="4" />
        <rect x="927.500" y="357.500" width="4" height="4" />
        <rect x="1078.500" y="530.500" width="4" height="4" />
        <rect x="948.500" y="700.500" width="4" height="4" />
        <rect x="582.500" y="730.500" width="4" height="4" fill="#000" />
      </g>
      <g stroke={red} strokeWidth="5" strokeLinecap="round">
        <rect x="243.500" y="187.500" width="232" height="44" />
        <path d="M388.500 244.500L547 347.500" />
        <ellipse cx="571.500" cy="354.500" rx="25.800" ry="14.200" />
        <rect x="874.500" y="183.500" width="148" height="48" />
        <path d="M884 233L781.500 358" />
        <ellipse cx="587" cy="733" rx="23.500" ry="17.500" />
        <path d="M597 751.500L694.500 819.500" />
        <rect x="704.500" y="801.500" width="304" height="51" />
        <ellipse cx="27.500" cy="474.500" rx="27" ry="19" />
        <path d="M44 492L128 703.500" />
        <rect x="57.500" y="721.500" width="157" height="53" />
        <rect x="1293.500" y="671.500" width="231" height="62" />
        <path d="M1491.500 667.500L1736 449.500" />
      </g>
      <g fill={red} fontSize="32" fontFamily="Lato, sans-serif" className="[font-variant-ligatures:none]">
        <text x="254.500" y="219" textLength="193.500" lengthAdjust="spacingAndGlyphs">Anchor point</text>
        <text x="891" y="220" textLength="68" lengthAdjust="spacingAndGlyphs">Path</text>
        <text x="707" y="835.500" textLength="290.500" lengthAdjust="spacingAndGlyphs">Active anchor point</text>
        <text x="1303.500" y="712.500" textLength="196" lengthAdjust="spacingAndGlyphs">Paths Palette</text>
        <text x="60" y="761.500" textLength="131" lengthAdjust="spacingAndGlyphs">Pen Tool</text>
      </g>
    </svg>
  );
}

/* ---------- Taskbar ---------- */

function AdobeTile({ label, bg, fg }: { label: string; bg: string; fg: string }) {
  return (
    <div className={"flex h-[16px] w-[17px] items-center justify-center border text-[9px] font-bold leading-none " + bg + " " + fg}>
      {label}
    </div>
  );
}

const TASKS: { w: string; on?: boolean; current?: boolean; icon: ReactNode }[] = [
  {
    w: "w-[36px]",
    icon: (
      <Ico size={17}>
        <path d="M1 3.500l7.500-1.200v7.200H1zM9.500 2.200L19 1v8.500H9.500zM1 10.500h7.500v7.200L1 16.500zM9.500 10.500H19V19l-9.500-1.200z" fill="#fff" />
      </Ico>
    ),
  },
  {
    w: "w-[36px]",
    icon: (
      <Ico size={18}>
        <circle cx="12.500" cy="7.500" r="5.500" stroke="#fff" strokeWidth="1.400" />
        <path d="M8.500 11.500L2 18" stroke="#fff" strokeWidth="1.400" />
      </Ico>
    ),
  },
  {
    w: "w-[37px]",
    icon: (
      <Ico size={18}>
        <path d="M2 1v2.500h11V1M2 19v-2.500h11V19M2.500 6.500h10v7h-10zM17 1v4M17 10v9" stroke="#fff" strokeWidth="1.300" />
        <path d="M15.500 6h3v3h-3z" fill="#fff" />
      </Ico>
    ),
  },
  {
    w: "w-[39px]",
    icon: (
      <Ico size={18}>
        <path d="M2 2h7l1.500 2H19v13H2z" fill="#e8b63a" />
        <path d="M2 6h17v11.500H2z" fill="#fddc7e" />
        <path d="M5 18.500V11h11v7.500h-3V14H8v4.500z" fill="#3aa7e8" />
      </Ico>
    ),
  },
  {
    w: "w-[37px]",
    icon: (
      <Ico size={18}>
        <rect x="1" y="3.500" width="18" height="13.500" fill="#4db4ea" stroke="#8ad2f5" />
        <path d="M3 5.500h14v9.500H3z" fill="#1b7fc4" />
        <circle cx="7" cy="9" r="2.700" fill="#fff" />
        <path d="M11 7h5v2h-5zM11 10h5v1.500h-5zM4 13h5v1.500H4z" fill="#d6eefb" />
        <path d="M11 12.800h5v1.700h-5z" fill="#f5b835" />
      </Ico>
    ),
  },
  {
    w: "w-[37px]",
    icon: (
      <Ico size={17}>
        <path d="M10 10L2 5.400A9.200 9.200 0 0118 5.400z" fill="#ea4335" />
        <path d="M10 10L2 5.400A9.200 9.200 0 0010 19.200L14 12z" fill="#34a853" />
        <path d="M10 10l-.2 9.200A9.200 9.200 0 0018 5.400h-8z" fill="#fbbc05" />
        <circle cx="10" cy="10" r="4.600" fill="#fff" />
        <circle cx="10" cy="10" r="3.600" fill="#4285f4" />
      </Ico>
    ),
  },
  {
    w: "w-[37px]",
    on: true,
    icon: (
      <Ico size={18}>
        <circle cx="10" cy="11" r="8.500" fill="#ff6a2b" />
        <path d="M11 1c5 2.500 8.500 7 7.500 12-1 4-4.500 6.500-8.500 6.500 5-1 7-5 5.500-9C14 7 11.500 5.500 11 1z" fill="#ffcf3d" />
        <path d="M2 10c-.5-3 .5-5.500 2-7 .5 2 2 3 4 3.500z" fill="#ff9a33" />
        <circle cx="10" cy="11" r="4.300" fill="#7a3fd1" />
        <path d="M4 14c3 1.500 6 1 8-1-.5 4-6 5.500-8 1z" fill="#ff3b52" />
      </Ico>
    ),
  },
  {
    w: "w-[37px]",
    on: true,
    icon: (
      <Ico size={19}>
        <path d="M14.500 1L19 3v14l-4.500 2z" fill="#35aaf2" />
        <path d="M14.500 1L1.500 13l2 1.800L15 6.500zM14.500 19L1.500 7l2-1.800L15 13.500z" fill="#1684cf" />
      </Ico>
    ),
  },
  {
    w: "w-[37px]",
    icon: (
      <Ico size={18}>
        <path d="M10 0l4.500 4.500L10 9 5.500 4.500z" fill="#e8695c" />
        <path d="M15 5.500l4.500 4.500-4.500 4.500L10.500 10z" fill="#8fd47d" />
        <path d="M5 5.500L9.500 10 5 14.500.5 10z" fill="#8db4f0" />
        <path d="M10 11l4.500 4.500L10 20l-4.500-4.500z" fill="#f3d98a" />
        <path d="M7 3l6 6.500M10 7v8" stroke="#222" strokeWidth="1.300" />
        <circle cx="10" cy="7" r="1.200" fill="#222" />
        <circle cx="10" cy="14.500" r="1.200" fill="#222" />
      </Ico>
    ),
  },
  {
    w: "w-[37px]",
    icon: (
      <Ico size={18}>
        <circle cx="10" cy="10" r="9" fill="#7b3f9e" />
        <path d="M5.500 5.500l2.500 1h4l2.500-1 .5 4c0 4-2 5.500-5 5.500s-5-1.500-5-5.500z" fill="#f3eef7" />
      </Ico>
    ),
  },
  { w: "w-[37px]", on: true, icon: <AdobeTile label="Br" bg="bg-[#2b1f00] border-[#e8b400]" fg="text-[#f2bd00]" /> },
  { w: "w-[36px]", on: true, current: true, icon: <AdobeTile label="Ps" bg="bg-[#0c0a4a] border-[#8bc4ff]" fg="text-[#9ccbff]" /> },
  { w: "w-[38px]", icon: <AdobeTile label="Ai" bg="bg-[#2d1700] border-[#ff9a1c]" fg="text-[#ffa436]" /> },
  { w: "w-[36px]", icon: <AdobeTile label="Id" bg="bg-[#2d0416] border-[#e8308a]" fg="text-[#f0409a]" /> },
];

function Taskbar() {
  return (
    <div className="flex h-[30px] shrink-0 bg-[#0a0a0a] text-white">
      {TASKS.map((t, i) => (
        <div key={i} className={"flex flex-col items-center " + t.w + (t.current ? " bg-[#383838]" : "")}>
          <div className="flex h-[28px] items-center justify-center pt-px">{t.icon}</div>
          {t.on && <div className={"h-[2px] bg-[#a6f2cc] " + (t.current ? "w-full" : "w-[28px]")} />}
        </div>
      ))}
      <div className="ml-auto flex items-center">
        <svg width="150" height="20" viewBox="0 0 150 20" fill="none" stroke="#fff" className="shrink-0">
          <circle cx="30" cy="5" r="2.500" strokeWidth="1.200" />
          <circle cx="24" cy="10" r="2.800" strokeWidth="1.200" />
          <path d="M19.500 17.500c.5-3 2-4.500 4.500-4.500s4 1.500 4.500 4.500M27 9.500c3-2.500 6.500-1 6.500 3" strokeWidth="1.200" />
          <path d="M51 13l5.500-6 5.500 6" strokeWidth="1.400" />
          <rect x="73.500" y="5.500" width="12" height="9" strokeWidth="1.200" />
          <path d="M76 8h5v4h-5zM86 8h1.500v4H86z" fill="#fff" stroke="none" />
          <path d="M99.500 16c0-6 5-11 11-11" stroke="#aaa" />
          <path d="M102.500 16c0-4.500 3.500-8 8-8M105.500 16c0-3 2-5 5-5" />
          <circle cx="109.500" cy="14.800" r="1.400" fill="#fff" stroke="none" />
          <path d="M120.500 8h2.500l3.500-3.500v11.500L123 12.500h-2.500z" />
          <path d="M129 7.500c1.500 1.500 1.500 4 0 5.500M131.500 5.500c2.500 2.500 2.500 7 0 9.500" />
          <path d="M134 4c3 3.500 3 9 0 12.500" stroke="#777" />
        </svg>
        <div className="ml-[-3px] w-[45px] text-[11px] leading-none tracking-[-0.2px]">05:54</div>
        <svg width="17" height="18" viewBox="0 0 17 18" fill="none" className="shrink-0">
          <path d="M1 2h15v11.500h-5L8.500 16 6 13.500H1z" stroke="#fff" strokeWidth="1.400" />
        </svg>
        <div className="mr-[4px] ml-[19px] h-[30px] w-px bg-[#6a6a6a]" />
      </div>
    </div>
  );
}

export default function App() {
  return (
    <div className="relative flex h-[1080px] w-[1920px] flex-col overflow-hidden bg-[#3a3a3a] font-['Open_Sans',sans-serif]">
      <MenuBar />
      <OptionsBar />
      <div className="h-px shrink-0 bg-[#2a2a2a]" />
      <div className="flex min-h-0 flex-1">
        <ToolColumn />
        <DocumentArea />
        <Dock />
      </div>
      <Taskbar />
      <Marks />
    </div>
  );
}
